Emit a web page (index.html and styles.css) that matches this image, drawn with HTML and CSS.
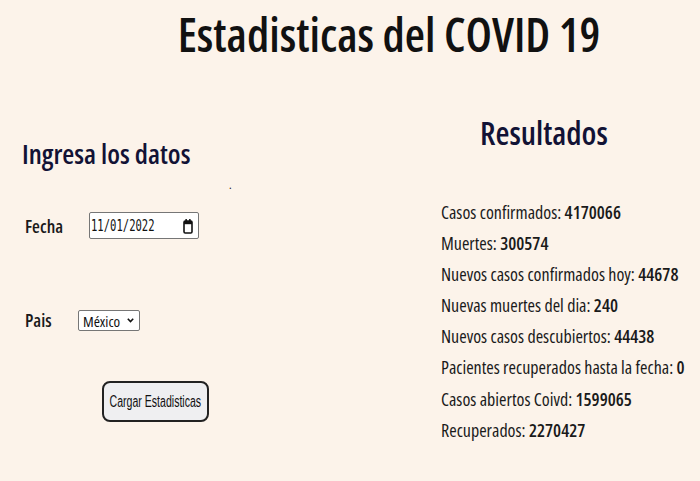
FILE: index.html
```html
<!DOCTYPE html>
<html lang="es">
<head>
<meta charset="utf-8">
<title>Estadisticas del COVID 19</title>
<link rel="stylesheet" href="styles.css">
</head>
<body>
<h1 class="title">Estadisticas del COVID 19</h1>
<div class="layout">
  <section class="form-col">
    <h2 class="form-title">Ingresa los datos</h2>
    <div class="dot">.</div>
    <div class="field field-date">
      <label class="label" for="fecha">Fecha</label>
      <div class="date" id="fecha">
        <span class="date-text">11/01/2022</span>
        <svg class="cal" width="10" height="16" viewBox="0 0 10 16" aria-hidden="true">
          <rect x="1" y="3" width="8" height="12" rx="1.2" fill="none" stroke="#111" stroke-width="1.6"/>
          <rect x="1" y="3" width="8" height="3.2" fill="#111"/>
          <rect x="2.4" y="1" width="1.5" height="3" fill="#111"/>
          <rect x="6.1" y="1" width="1.5" height="3" fill="#111"/>
        </svg>
      </div>
    </div>
    <div class="field field-pais">
      <label class="label" for="pais">Pais</label>
      <div class="select-wrap">
        <select class="select" id="pais"><option>México</option></select>
        <svg class="chev" width="7" height="5" viewBox="0 0 7 5" aria-hidden="true">
          <path d="M0.8 0.8 L3.5 3.6 L6.2 0.8" fill="none" stroke="#111" stroke-width="1.6"/>
        </svg>
      </div>
    </div>
    <div class="actions">
      <button class="btn" type="button"><span class="btn-text">Cargar Estadisticas</span></button>
    </div>
  </section>
  <section class="results-col">
    <h2 class="results-title">Resultados</h2>
    <ul class="results">
      <li>Casos confirmados: <b>4170066</b></li>
      <li>Muertes: <b>300574</b></li>
      <li>Nuevos casos confirmados hoy: <b>44678</b></li>
      <li>Nuevas muertes del dia: <b>240</b></li>
      <li>Nuevos casos descubiertos: <b>44438</b></li>
      <li>Pacientes recuperados hasta la fecha: <b>0</b></li>
      <li>Casos abiertos Coivd: <b>1599065</b></li>
      <li>Recuperados: <b>2270427</b></li>
    </ul>
  </section>
</div>
</body>
</html>
```
FILE: styles.css
```css
html, body {
  margin: 0;
  padding: 0;
}
body {
  background: #fcf3ea;
  font-family: "Open Sans", "DejaVu Sans Condensed", sans-serif;
  font-stretch: 75%;
  color: #111;
  width: 700px;
  height: 481px;
  overflow: hidden;
}
.title {
  margin: 0;
  padding: 2px 0 0 78px;
  text-align: center;
  font-size: 46.5px;
  font-weight: 600;
  line-height: 64px;
  color: #111;
}
.layout {
  display: flex;
}
.form-col {
  width: 420px;
  padding-left: 22px;
  box-sizing: border-box;
}
.form-title {
  margin: 70px 0 0;
  font-size: 27.5px;
  font-weight: 600;
  line-height: 36px;
  color: #121235;
}
.dot {
  margin: 7px 0 0 207px;
  font-size: 12px;
  line-height: 12px;
  height: 12px;
}
.field {
  display: flex;
  align-items: center;
}
.field-date {
  margin-top: 21px;
  padding-left: 3px;
}
.field-date .label {
  width: 64px;
}
.field-pais {
  margin-top: 69px;
  padding-left: 3px;
}
.field-pais .label {
  width: 53px;
}
.label {
  font-size: 18px;
  font-weight: 600;
  color: #1a1a1a;
}
.date {
  width: 110px;
  height: 27px;
  box-sizing: border-box;
  display: flex;
  align-items: center;
  justify-content: space-between;
  padding: 0 5px 0 1px;
  border: 1px solid #767676;
  border-radius: 2px;
  background: #fff;
  overflow: hidden;
}
.date-text {
  display: inline-block;
  width: 64px;
  font-family: "DejaVu Sans Mono", monospace;
  font-stretch: 100%;
  font-size: 16px;
  line-height: 20px;
  color: #111;
  transform: scaleX(0.66);
  transform-origin: left center;
  white-space: nowrap;
}
.cal {
  display: block;
}
.select-wrap {
  position: relative;
  width: 62px;
  height: 21px;
}
.select {
  appearance: none;
  -webkit-appearance: none;
  width: 62px;
  height: 21px;
  box-sizing: border-box;
  padding: 0 0 0 4px;
  font-family: "Open Sans", sans-serif;
  font-stretch: 75%;
  font-size: 15px;
  color: #111;
  border: 1px solid #767676;
  border-radius: 2px;
  background: #fff;
}
.chev {
  position: absolute;
  right: 6px;
  top: 8px;
  pointer-events: none;
}
.actions {
  margin-top: 49px;
  padding-left: 80px;
}
.btn {
  width: 107px;
  height: 41px;
  padding: 0;
  display: flex;
  align-items: center;
  justify-content: center;
  color: #111;
  background: #efeff1;
  border: 2px solid #222;
  border-radius: 8px;
}
.btn-text {
  display: inline-block;
  font-family: "Liberation Sans", Arial, sans-serif;
  font-size: 16px;
  white-space: nowrap;
  transform: scaleX(0.66);
}
.results-col {
  flex: 1;
}
.results-title {
  margin: 45px 0 0;
  padding-left: 60px;
  font-size: 32px;
  font-weight: 600;
  line-height: 44px;
  color: #121235;
}
.results {
  list-style: none;
  margin: 42px 0 0;
  padding: 0 0 0 21px;
  font-size: 18px;
  line-height: 31.1px;
  color: #1a1a1a;
}
.results b {
  font-weight: 600;
}
```
